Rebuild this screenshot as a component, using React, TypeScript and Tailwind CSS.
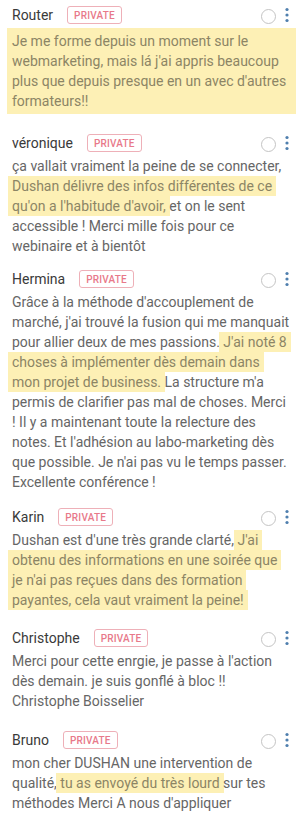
type Part = string | { hl: string };

type Comment = {
  name: string;
  gap: string;
  block?: boolean;
  parts: Part[];
};

const comments: Comment[] = [
  {
    name: "Router",
    gap: "mt-[5px]",
    block: true,
    parts: [
      {
        hl: "Je me forme depuis un moment sur le webmarketing, mais lá j'ai appris beaucoup plus que depuis presque en un avec d'autres formateurs!!",
      },
    ],
  },
  {
    name: "véronique",
    gap: "mt-[19px]",
    parts: [
      "ça vallait vraiment la peine de se connecter, ",
      { hl: "Dushan délivre des infos différentes de ce qu'on a l'habitude d'avoir," },
      " et on le sent accessible ! Merci mille fois pour ce webinaire et à bientôt",
    ],
  },
  {
    name: "Hermina",
    gap: "mt-[13px]",
    parts: [
      "Grâce à la méthode d'accouplement de marché, j'ai trouvé la fusion qui me manquait pour allier deux de mes passions. ",
      { hl: "J'ai noté 8 choses à implémenter dès demain dans mon projet de business." },
      " La structure m'a permis de clarifier pas mal de choses. Merci ! Il y a maintenant toute la relecture des notes. Et l'adhésion au labo-marketing dès que possible. Je n'ai pas vu le temps passer. Excellente conférence !",
    ],
  },
  {
    name: "Karin",
    gap: "mt-[15px]",
    parts: [
      "Dushan est d'une très grande clarté, ",
      {
        hl: "J'ai obtenu des informations en une soirée que je n'ai pas reçues dans des formation payantes, cela vaut vraiment la peine!",
      },
    ],
  },
  {
    name: "Christophe",
    gap: "mt-[18px]",
    parts: [
      "Merci pour cette enrgie, je passe à l'action dès demain. je suis gonflé à bloc !! Christophe Boisselier",
    ],
  },
  {
    name: "Bruno",
    gap: "mt-[19px]",
    parts: [
      "mon cher DUSHAN une intervention de qualité, ",
      { hl: "tu as envoyé du très lourd" },
      " sur tes méthodes Merci A nous d'appliquer",
    ],
  },
];

function Dots() {
  return (
    <svg width="6" height="16" viewBox="0 0 6 16" className="text-[#4f7fae]">
      <circle cx="3" cy="2.5" r="1.6" fill="currentColor" />
      <circle cx="3" cy="8" r="1.6" fill="currentColor" />
      <circle cx="3" cy="13.5" r="1.6" fill="currentColor" />
    </svg>
  );
}

function Item({ c }: { c: Comment }) {
  return (
    <div className={c.gap}>
      <div className="flex h-5 items-center">
        <span className="text-[14px] text-[#3a3a3a]">{c.name}</span>
        <span className="ml-[14px] flex h-[18px] items-center rounded-[3px] border border-[#eeb0b8] px-[6px] text-[10px] font-medium tracking-[0.2px] text-[#e8798a]">
          PRIVATE
        </span>
        <div className="ml-auto flex items-center gap-[8px] pr-[1px]">
          <span className="mt-[3px] h-[15px] w-[15px] rounded-full border border-[#c4c4c4]" />
          <Dots />
        </div>
      </div>
      {c.block ? (
        <div className="-mx-[5px] mt-[3px] bg-[#fdf0b5] px-[5px] py-[3px] text-[14px] leading-5 text-[#8c8565]">
          {c.parts.map((p) => (typeof p === "string" ? p : p.hl))}
        </div>
      ) : (
        <p className="mt-[3px] text-[14px] leading-5 text-[#666]">
          {c.parts.map((p, i) =>
            typeof p === "string" ? (
              <span key={i}>{p}</span>
            ) : (
              <span
                key={i}
                className="bg-[#fdf0b5] box-decoration-clone py-[2px] text-[#8c8565] shadow-[-4px_0_0_#fdf0b5,4px_0_0_#fdf0b5]"
              >
                {p.hl}
              </span>
            )
          )}
        </p>
      )}
    </div>
  );
}

export default function App() {
  return (
    <div
      className="min-h-screen w-[303px] bg-white pl-3 pr-[12px]"
      style={{ fontFamily: "Roboto, 'Noto Sans', sans-serif" }}
    >
      {comments.map((c) => (
        <Item key={c.name} c={c} />
      ))}
    </div>
  );
}
